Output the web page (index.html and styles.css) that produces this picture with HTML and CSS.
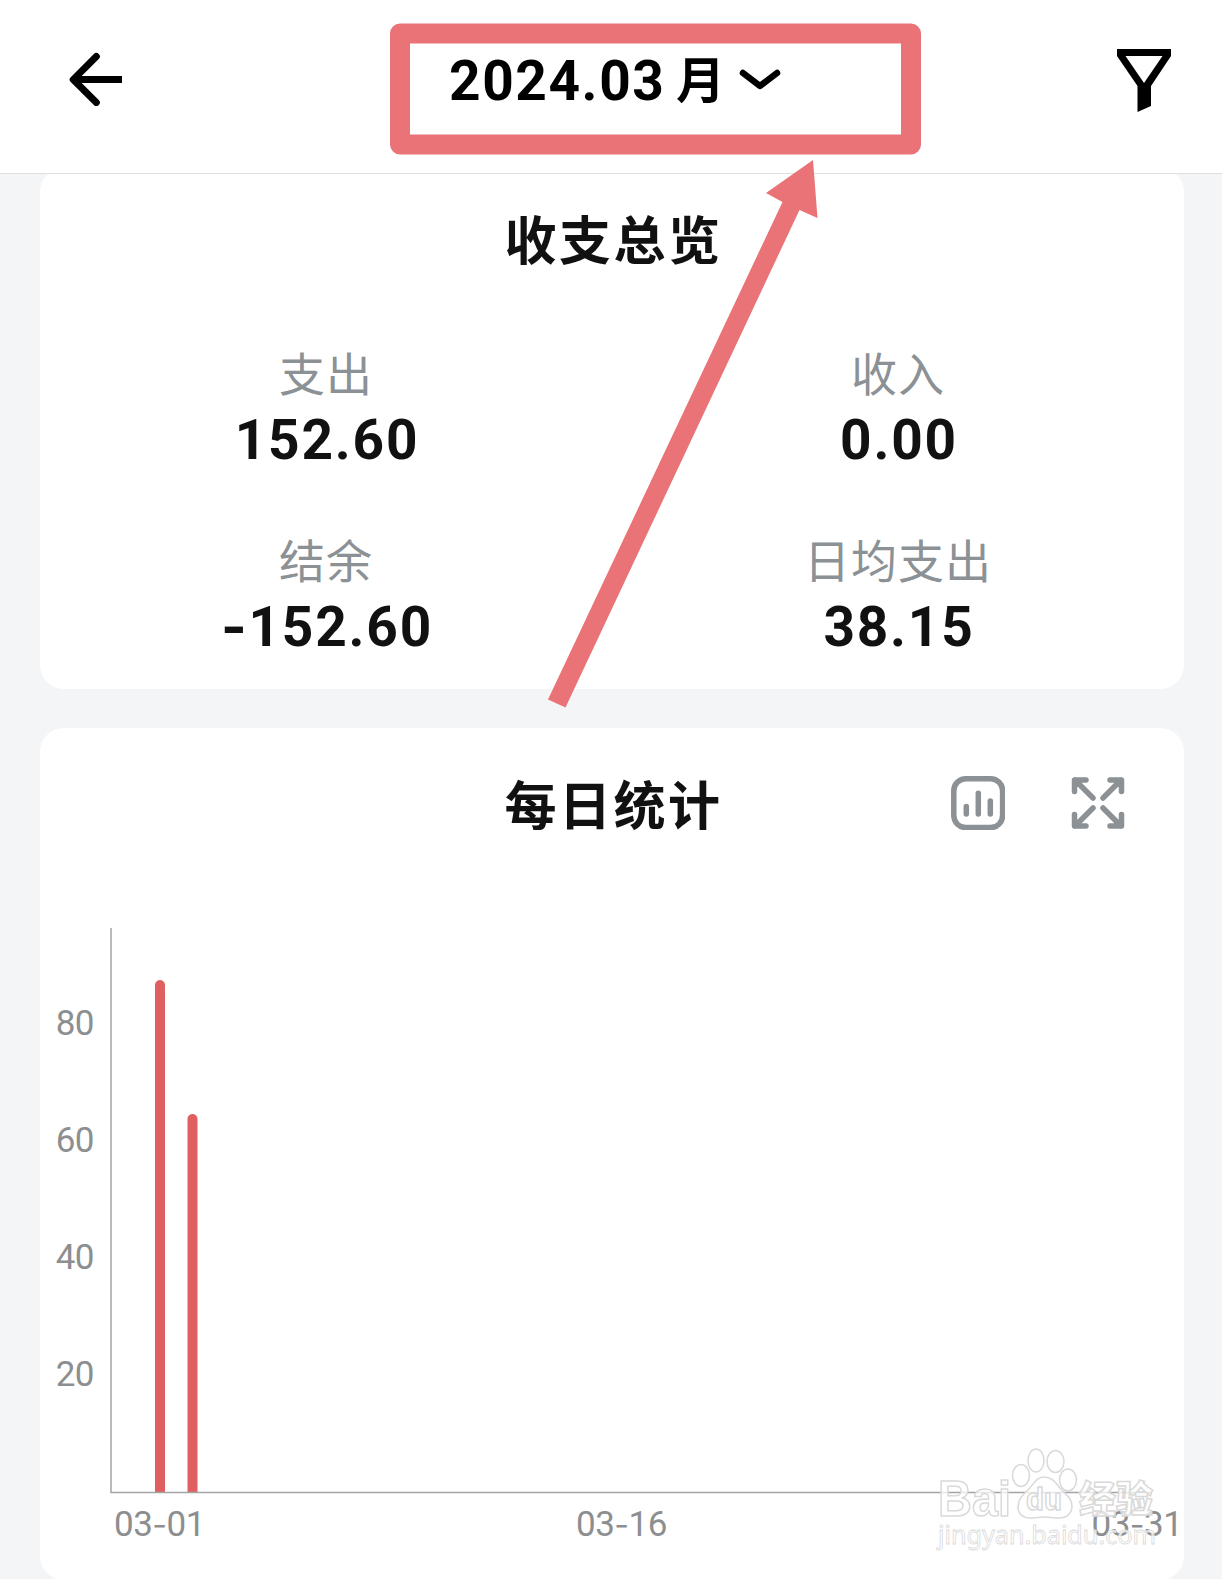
FILE: index.html
```html
<!DOCTYPE html>
<html lang="zh-CN">
<head>
<meta charset="utf-8">
<title>收支统计</title>
<link rel="stylesheet" href="styles.css">
</head>
<body>
<div class="app">
  <header class="topbar">
    <svg class="back" viewBox="0 0 54 54"><path d="M27.300 4.500 4.200 27.600l23.100 23" class="round"/><path d="M5 27.600h48"/></svg>
    <div class="month"><span class="digits">2024.03</span><span class="unit">月</span><svg class="chevron" viewBox="0 0 42 22"><path d="M4 4l17 13L38 4"/></svg></div>
    <svg class="filter" viewBox="0 0 54 64"><path fill-rule="evenodd" d="M0 0H54V7L34 37V57L20.500 63V37L0 7ZM8.500 7 27 34 45.500 7Z"/></svg>
  </header>

  <main>
    <section class="card overview">
      <h2>收支总览</h2>
      <div class="stats">
        <div class="stat"><span class="label">支出</span><span class="value">152.60</span></div>
        <div class="stat"><span class="label">收入</span><span class="value">0.00</span></div>
        <div class="stat"><span class="label">结余</span><span class="value"><span class="dash">-</span>152.60</span></div>
        <div class="stat"><span class="label">日均支出</span><span class="value">38.15</span></div>
      </div>
    </section>

    <section class="card daily">
      <div class="daily-head">
        <h2>每日统计</h2>
        <div class="tools">
          <svg class="tool" viewBox="0 0 54 54"><rect x="2.800" y="2.800" width="48.800" height="48.800" rx="12"/><path d="M15.300 30.500v7.500M27.300 17.300v20.700M39.300 25v13"/></svg>
          <svg class="tool" viewBox="0 0 54 54"><path d="M15 4H3.500V15.500M4 4l18 18M39 4H50.500V15.500M50 4 32 22M15 50H3.500V38.500M4 50l18-18M39 50H50.500V38.500M50 50 32 32"/></svg>
        </div>
      </div>
      <svg class="chart" viewBox="0 0 1144 700">
        <g class="bars"><path d="M115 633V125a5 5 0 0 1 10 0V633ZM147.500 633V259a5 5 0 0 1 10 0V633Z"/></g>
        <path class="axis" d="M71 68V632.500H1112"/>
        <g class="ylabels">
          <text x="54" y="175">80</text><text x="54" y="292">60</text><text x="54" y="409">40</text><text x="54" y="526">20</text>
        </g>
        <g class="xlabels">
          <text x="74" y="676">03<tspan class="dash">-</tspan>01</text><text x="536" y="676">03<tspan class="dash">-</tspan>16</text><text x="1051.500" y="676">03<tspan class="dash">-</tspan>31</text>
        </g>
      </svg>
    </section>
  </main>

  <svg class="overlay" viewBox="0 0 1222 1579">
    <rect class="frame" x="400" y="33.500" width="511" height="111" />
    <path class="pointer" d="M813 160 817.500 218 799.500 210 565.500 707.500 548 699.500 782.500 202 766 193Z"/>
    <g class="watermark">
      <g class="mark">
        <ellipse cx="1021" cy="1475.500" rx="8.500" ry="11"/><ellipse cx="1036" cy="1460.500" rx="8" ry="11.500"/><ellipse cx="1055.500" cy="1461.500" rx="8.500" ry="11"/><ellipse cx="1068" cy="1480" rx="8.500" ry="11"/>
        <path d="M1044 1477C1037 1477 1034 1483 1029 1489 1024 1494 1018 1498 1018 1507 1018 1514 1023 1518 1030 1518 1036 1518 1039 1517 1044 1517 1049 1517 1053 1518 1059 1518 1067 1518 1072 1513 1072 1506 1072 1498 1065 1494 1060 1488 1055 1482 1052 1477 1044 1477Z"/>
      </g>
      <text class="brand" x="938" y="1516" textLength="73" lengthAdjust="spacingAndGlyphs">Bai</text>
      <text class="brand small" x="1026" y="1510" textLength="36" lengthAdjust="spacingAndGlyphs">du</text>
      <text class="brand cn" x="1079" y="1513" textLength="74">经验</text>
      <text class="url" x="938" y="1544" textLength="218" lengthAdjust="spacingAndGlyphs">jingyan.baidu.com</text>
    </g>
  </svg>
</div>
</body>
</html>
```

FILE: styles.css
```css
* { box-sizing: border-box; }
body { margin: 0; background: #f4f5f7; font-family: Roboto, "Noto Sans CJK SC", sans-serif; color: #111; }
.app { position: relative; width: 1222px; height: 1579px; overflow: hidden; }
.topbar { position: relative; z-index: 1; height: 174px; padding: 49px 51px 0 69px; display: flex; align-items: flex-start; background: #fff; border-bottom: 1px solid #dedfe1; color: #000; }
.back { width: 54px; height: 54px; margin-top: 3px; fill: none; stroke: #000; stroke-width: 7; }
.back .round { stroke-linecap: round; stroke-linejoin: round; }
.month { flex: 1; display: flex; align-items: center; height: 62px; margin-left: 325px; font-weight: 700; }
.digits { width: 227px; padding: 2px 0 0 1px; font-size: 55px; line-height: 62px; letter-spacing: 1.600px; }
.unit { font-size: 49px; line-height: 62px; width: 64px; padding: 3px 0 0 1px; }
.chevron { width: 42px; height: 22px; fill: none; stroke: #000; stroke-width: 6.500; stroke-linecap: round; stroke-linejoin: round; }
.filter { width: 54px; height: 64px; }
main { padding: 0 38px 0 40px; margin-top: -6px; }
.card { background: #fff; border-radius: 24px; }
h2 { margin: 0; font-size: 52px; line-height: 64px; font-weight: 700; letter-spacing: 2.500px; text-align: center; padding-left: 3px; }
.overview { height: 521px; padding-top: 43px; }
.stats { display: grid; grid-template-columns: 1fr 1fr; margin-top: 70px; row-gap: 60px; }
.stat { display: flex; flex-direction: column; align-items: center; }
.label { font-size: 46px; line-height: 60px; letter-spacing: 1px; color: #8b9195; }
.value { height: 67px; padding: 2px 0 0 2px; font-size: 55px; line-height: 66px; font-weight: 700; letter-spacing: 1.800px; }
.dash { font-family: Inter, sans-serif; line-height: 0; }
.daily { margin-top: 39px; height: 852px; padding-top: 44px; }
.daily-head { display: grid; grid-template-columns: 1fr auto 1fr; align-items: start; height: 64px; }
.daily-head h2 { grid-column: 2; padding-top: 4px; }
.tools { display: flex; justify-content: flex-end; gap: 66px; padding: 4px 59px 0 0; }
.tool { width: 54px; height: 54px; fill: none; stroke: #8b9195; stroke-width: 5.500; stroke-linecap: round; stroke-linejoin: round; }
.chart { display: block; width: 1144px; height: 700px; margin-top: 24px; }
.bars { fill: #e06060; }
.axis { fill: none; stroke: #a3a4a6; stroke-width: 1.500; }
.ylabels, .xlabels { font-size: 35px; fill: #8c8e90; letter-spacing: -.5px; }
.ylabels { text-anchor: end; }
.xlabels .dash { font-size: 32px; }
.overlay { position: absolute; inset: 0; width: 1222px; height: 1579px; z-index: 2; pointer-events: none; }
.frame { fill: none; stroke: #e97377; stroke-width: 20; stroke-linejoin: round; }
.pointer { fill: #e97377; }
.watermark { fill: #fff; fill-opacity: .75; stroke: #d9d9d9; stroke-width: 1.500; }
.brand { font-family: "Liberation Sans", "Noto Sans CJK SC", sans-serif; font-size: 50px; font-weight: 700; }
.small { font-size: 31px; }
.cn { font-size: 37px; font-weight: 900; }
.url { font-family: "Noto Sans", sans-serif; font-size: 26px; stroke-width: .8; }
```
